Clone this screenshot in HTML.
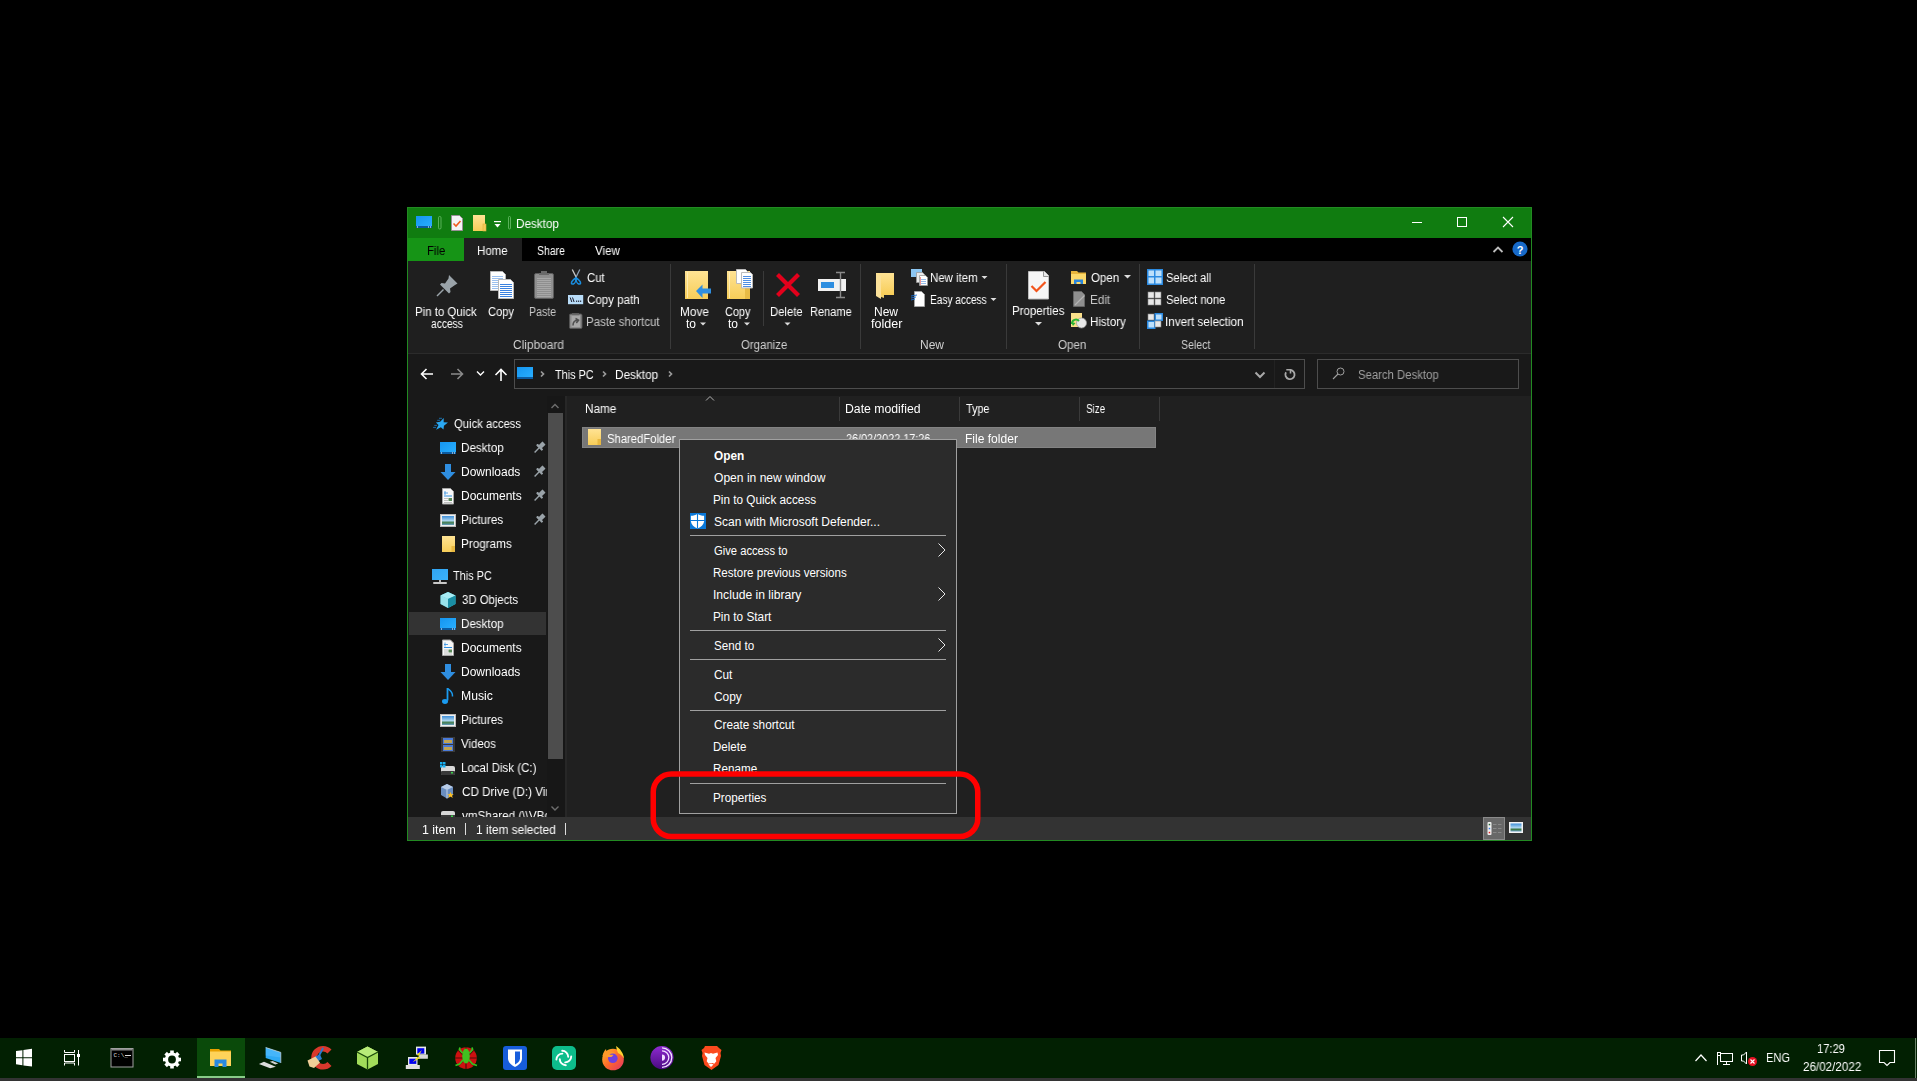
<!DOCTYPE html>
<html><head><meta charset="utf-8">
<style>
*{margin:0;padding:0;box-sizing:border-box}
html,body{width:1917px;height:1081px;background:#000;overflow:hidden;font-family:"Liberation Sans",sans-serif;font-size:12px;color:#fff}
.a{position:absolute}
.t{position:absolute;white-space:nowrap;line-height:16px;height:16px;transform-origin:0 0;will-change:transform}

svg{position:absolute;overflow:visible}
.m{will-change:auto}
</style></head><body>

<!-- window frame -->
<div class="a" style="left:407px;top:207px;width:1125px;height:634px;background:#228a22"></div>
<!-- title bar -->
<div class="a" style="left:408px;top:208px;width:1123px;height:30px;background:#107c10"></div>
<!-- tab row -->
<div class="a" style="left:408px;top:238px;width:1123px;height:23px;background:#000"></div>
<div class="a" style="left:408px;top:238px;width:56px;height:23px;background:#169416"></div>
<div class="a" style="left:464px;top:238px;width:58px;height:23px;background:#1f1f1f"></div>
<!-- ribbon body -->
<div class="a" style="left:408px;top:261px;width:1123px;height:92px;background:#1f1f1f"></div>
<div class="a" style="left:408px;top:353px;width:1123px;height:1px;background:#2b2b2b"></div>
<!-- address row -->
<div class="a" style="left:408px;top:354px;width:1123px;height:42px;background:#191919"></div>
<!-- nav pane -->
<div class="a" style="left:408px;top:396px;width:139px;height:421px;background:#191919"></div>
<div class="a" style="left:547px;top:396px;width:18px;height:421px;background:#171717"></div>
<!-- content -->
<div class="a" style="left:565px;top:396px;width:966px;height:421px;background:#202020"></div>
<div class="a" style="left:565px;top:396px;width:2px;height:421px;background:#272727"></div>
<!-- status bar -->
<div class="a" style="left:408px;top:817px;width:1123px;height:23px;background:#333333"></div>

<svg class="a" style="left:0;top:0" width="1917" height="1081" viewBox="0 0 1917 1081">
<defs>
<linearGradient id="gBlue" x1="0" y1="0" x2="1" y2="1"><stop offset="0" stop-color="#1595f0"/><stop offset="1" stop-color="#2ab0ff"/></linearGradient>
<linearGradient id="gFold" x1="0" y1="0" x2="0" y2="1"><stop offset="0" stop-color="#ffe394"/><stop offset="1" stop-color="#f7cd58"/></linearGradient>
</defs>
<!-- ===== title bar ===== -->
<rect x="416" y="216" width="16" height="12" fill="url(#gBlue)"/>
<rect x="416" y="226" width="16" height="2" fill="#0b5aa0"/>
<rect x="417" y="226.5" width="1" height="1" fill="#fff"/><rect x="428" y="226.5" width="1" height="1" fill="#fff"/><rect x="430" y="226.5" width="1" height="1" fill="#fff"/>
<rect x="438.5" y="216.5" width="2.5" height="12.5" rx="1.2" fill="none" stroke="#6cbf6c" stroke-width="0.8"/>
<path d="M451.5 215.5h8l3 3v12h-11z" fill="#f4f4f4" stroke="#9a8f98" stroke-width="1"/>
<path d="M453.5 223.5l2.5 2.5 4.5-5" fill="none" stroke="#f25a1c" stroke-width="1.6"/>
<rect x="473" y="215" width="12" height="16" fill="url(#gFold)"/>
<rect x="483" y="224" width="3" height="7" fill="#f4cc58" stroke="#e0b040" stroke-width="0.6"/>
<rect x="494" y="221" width="7" height="1.2" fill="#fff"/>
<path d="M494.5 224h6l-3 3.5z" fill="#fff"/>
<rect x="508.5" y="216.5" width="2" height="12.5" rx="1" fill="none" stroke="#6cbf6c" stroke-width="0.8"/>
<!-- window controls -->
<rect x="1412" y="222" width="10" height="1" fill="#fff"/>
<rect x="1457.5" y="217.5" width="9" height="9" fill="none" stroke="#fff" stroke-width="1"/>
<path d="M1503 217l10 10M1513 217l-10 10" stroke="#fff" stroke-width="1.1"/>
<!-- tab row right -->
<path d="M1493.5 252l4.5-4.5 4.5 4.5" fill="none" stroke="#bdbdbd" stroke-width="1.8"/>
<circle cx="1520" cy="249" r="7.6" fill="#1769c8"/>
<text x="1520" y="253.5" font-family="Liberation Sans" font-weight="bold" font-size="11" fill="#fff" text-anchor="middle">?</text>

<!-- ===== ribbon: clipboard ===== -->
<!-- pin -->
<g fill="#9aa3a9">
<path d="M449 275l8.5 8.5-2.5 1.5-5 3.5 0.5 3.5-1.5 1.5-9-9 1.5-1.5 3.5 0.5 3.5-5z"/>
<path d="M443 289l-6.5 6.5 1 1 6.5-6.5z"/>
</g>
<!-- copy -->
<path d="M490.5 271.5h12l3 3v16h-15z" fill="#fff" stroke="#b8b8b8"/>
<g stroke="#9cc0ee" stroke-width="1"><path d="M492 276.5h11M492 278.5h11M492 280.5h11M492 282.5h11M492 284.5h11M492 286.5h11M492 288.5h11"/></g>
<path d="M498.5 279.5h12l3 3v16h-15z" fill="#fff" stroke="#b8b8b8"/>
<g stroke="#3b82e0" stroke-width="1"><path d="M500 284.5h12M500 286.5h12M500 288.5h12M500 290.5h12M500 292.5h12M500 294.5h12M500 296.5h12"/></g>
<!-- paste -->
<rect x="534.5" y="273.5" width="19" height="25" rx="1.5" fill="#8f8f8f" stroke="#5c5c5c"/>
<g stroke="#a8a8a8" stroke-width="1"><path d="M537 278.5h14M537 280.5h14M537 282.5h14M537 284.5h14M537 286.5h14M537 288.5h14M537 290.5h14M537 292.5h14M537 294.5h14M537 296.5h14"/></g>
<path d="M539 275h10v-2h-2v-2h-6v2h-2z" fill="#6a6a6a"/>
<!-- scissors -->
<path d="M572.3 269.5l4.2 8.5" stroke="#c8c8c8" stroke-width="1.3"/>
<path d="M579.8 269.5l-4.2 8.5" stroke="#8ea0b4" stroke-width="1.3"/>
<path d="M576 278c-1.5 0.5-4.5 3-4.6 5 0 1 1 1.2 2 1 1.6-0.5 2.7-3.5 2.6-6z" fill="none" stroke="#1a8ee0" stroke-width="1.5"/>
<path d="M576 278c1.5 0.5 4.5 3 4.6 5 0 1-1 1.2-2 1-1.6-0.5-2.7-3.5-2.6-6z" fill="none" stroke="#1a8ee0" stroke-width="1.5"/>
<!-- copy path -->
<rect x="568" y="295" width="15.2" height="9.2" fill="#b8dcf8"/>
<path d="M570.2 297.5l1.6 4.5M572.5 297.5l1.6 4.5" stroke="#1a1a2a" stroke-width="1"/>
<rect x="576" y="300.6" width="1.2" height="1.2" fill="#1a1a2a"/><rect x="578" y="300.6" width="1.2" height="1.2" fill="#1a1a2a"/><rect x="580" y="300.6" width="1.2" height="1.2" fill="#1a1a2a"/>
<!-- paste shortcut -->
<rect x="569.5" y="314" width="12.5" height="14.5" rx="1.2" fill="#8c8c8c" stroke="#555" stroke-width="1"/>
<rect x="571.5" y="315.5" width="8.5" height="11.5" fill="#a8a8a8"/>
<rect x="572" y="313.2" width="7" height="2" fill="#666"/>
<path d="M573 325.5c0-3 1.5-5 4.5-5.2M575.5 318.5l3 1.8-2.2 2.6" fill="none" stroke="#505050" stroke-width="1.6"/>
<rect x="670" y="264" width="1" height="85" fill="#3a3a3a"/>

<!-- ===== organize ===== -->
<!-- move to -->
<rect x="685" y="271" width="23" height="28" fill="url(#gFold)"/>
<rect x="687" y="272" width="1" height="26" fill="#fff4c8" opacity="0.7"/>
<path d="M696 291l6.5-6.5v4h8.5v5h-8.5v4.5z" fill="#2f8ee0"/>
<!-- copy to -->
<rect x="727" y="271" width="23" height="28" fill="url(#gFold)"/>
<rect x="729" y="272" width="1" height="26" fill="#fff4c8" opacity="0.7"/>
<rect x="745" y="287" width="5" height="12" fill="#e8bb45"/>
<path d="M736.5 269.5h9l2 2v12h-11z" fill="#fff" stroke="#bbb"/>
<path d="M741.5 272.5h9l2 2v13.5h-11z" fill="#fff" stroke="#bbb"/>
<g stroke="#3b82e0" stroke-width="0.9"><path d="M743 276.5h8M743 278.5h8M743 280.5h8M743 282.5h8M743 284.5h8M743 286.5h8"/></g>
<rect x="763" y="271" width="1" height="55" fill="#3a3a3a"/>
<!-- delete -->
<path d="M777.5 274.5l21 21M798.5 274.5l-21 21" stroke="#e3001b" stroke-width="4.2"/>
<!-- rename -->
<rect x="818" y="279" width="28" height="12" fill="#f2f2f2"/>
<rect x="821" y="282" width="13" height="6" fill="#2e8ee0"/>
<path d="M836 272.5h9M836 297.5h9M840.5 273v24" stroke="#8a8a8a" stroke-width="1.4" fill="none"/>
<rect x="860" y="264" width="1" height="85" fill="#3a3a3a"/>

<!-- ===== new ===== -->
<path d="M876 274l8 2v22l-8-3z" fill="#f1cf6a"/>
<rect x="876" y="273" width="18" height="22" fill="url(#gFold)"/>
<path d="M876 274l5 2v23l-5-3z" fill="#fbe19a"/>
<!-- new item -->
<rect x="911" y="269" width="11" height="8" fill="#8cc6f2"/>
<path d="M916.5 272.5h6l2 2v8h-8z" fill="#e9e9e9" stroke="#999" stroke-width="0.8"/>
<path d="M919.5 275.5h6l2 2v8h-8z" fill="#fff" stroke="#999" stroke-width="0.8"/>
<g stroke="#6a9ee0" stroke-width="0.7"><path d="M921 279.5h5M921 281.5h5M921 283.5h5"/></g>
<path d="M920.5 277v8" stroke="#e05050" stroke-width="0.6"/>
<!-- easy access -->
<path d="M914.5 291.5h7l3 3v12h-10z" fill="#fff" stroke="#aaa" stroke-width="0.8"/>
<path d="M911 296l6-1M911 298l5-1M911 300l4-1" stroke="#1b6fd0" stroke-width="0.9"/>
<path d="M981.5 276h6l-3 3z" fill="#ddd"/>
<path d="M990.5 298h6l-3 3z" fill="#ddd"/>
<rect x="1006" y="264" width="1" height="85" fill="#3a3a3a"/>

<!-- ===== open ===== -->
<path d="M1028.5 271.5h16l4 4v23.5h-20z" fill="#f6f6f6" stroke="#bdbdbd"/>
<path d="M1043.5 271.5l5 5h-5z" fill="#e6e6e6"/><path d="M1043.5 271.5v5h5" fill="none" stroke="#8a8a8a" stroke-width="0.9"/>
<path d="M1031.5 286l5 5 9-9" fill="none" stroke="#f2541b" stroke-width="2.2"/>
<path d="M1035 322h7l-3.5 3.5z" fill="#ddd"/>
<!-- open small -->
<path d="M1071 271h6l1.5 1.5h7.5v11.5h-15z" fill="#e8b53c"/>
<rect x="1071" y="274" width="15" height="10" fill="#fcd96b"/>
<path d="M1074 284v-4.5h9v4.5h-2.5v-2h-4v2z" fill="#2a85dc"/>
<path d="M1124 275h7l-3.5 3.5z" fill="#ddd"/>
<!-- edit -->
<path d="M1073.5 291.5h8l3 3v12h-11z" fill="#8f8f8f" stroke="#6a6a6a" stroke-width="0.8"/>
<path d="M1075 305l9.5-9.5" stroke="#b4b4b4" stroke-width="1.2"/>
<!-- history -->
<rect x="1071" y="313" width="11" height="14" fill="#fbe08a"/>
<circle cx="1081.5" cy="323" r="5" fill="#e8e8e8" stroke="#999" stroke-width="0.7"/>
<path d="M1072 324a4 4 0 0 1 7-3" stroke="#2ab534" stroke-width="2" fill="none"/>
<path d="M1071 322l2 4 2.5-3z" fill="#2ab534"/>
<rect x="1139" y="264" width="1" height="85" fill="#3a3a3a"/>

<!-- ===== select ===== -->
<rect x="1147" y="269" width="16" height="16" fill="#2b8ae0"/>
<rect x="1148.5" y="270.5" width="5.5" height="5.5" fill="#bde0fb"/><rect x="1155.5" y="270.5" width="6" height="5.5" fill="#bde0fb"/>
<rect x="1148.5" y="277.5" width="5.5" height="6" fill="#bde0fb"/><rect x="1155.5" y="277.5" width="6" height="6" fill="#bde0fb"/>
<g fill="#e8e8e8" stroke="#888" stroke-width="0.6">
<rect x="1148" y="292" width="6" height="6"/><rect x="1155" y="292" width="6" height="6"/>
<rect x="1148" y="299" width="6" height="6"/><rect x="1155" y="299" width="6" height="6"/>
</g>
<rect x="1148" y="314" width="6" height="6" fill="#e8e8e8" stroke="#888" stroke-width="0.6"/>
<rect x="1154.5" y="313" width="8.5" height="8" fill="#2b8ae0"/><rect x="1156" y="314.5" width="5.5" height="5" fill="#bde0fb"/>
<rect x="1147" y="320.5" width="8.5" height="8.5" fill="#2b8ae0"/><rect x="1148.5" y="322" width="5.5" height="5.5" fill="#bde0fb"/>
<rect x="1155" y="321" width="6" height="6" fill="#e8e8e8" stroke="#888" stroke-width="0.6"/>
<rect x="1254" y="264" width="1" height="85" fill="#3a3a3a"/>
<path d="M700 322.5h6l-3 3z" fill="#ddd"/>
<path d="M744 322.5h6l-3 3z" fill="#ddd"/>
<path d="M784.5 322.5h6l-3 3z" fill="#ddd"/>

<!-- ===== address row ===== -->
<path d="M433 374h-11M426.5 369l-5 5 5 5" fill="none" stroke="#fff" stroke-width="1.6"/>
<path d="M451 374h11M457.5 369l5 5-5 5" fill="none" stroke="#8a8a8a" stroke-width="1.6"/>
<path d="M477 371.5l3.5 3.5 3.5-3.5" fill="none" stroke="#fff" stroke-width="1.4"/>
<path d="M501 381v-11.5M495.5 375l5.5-5.5 5.5 5.5" fill="none" stroke="#fff" stroke-width="1.6"/>
<rect x="514.5" y="359.5" width="790" height="29" fill="none" stroke="#4d4d4d"/>
<rect x="1274" y="360" width="1" height="28" fill="#222"/>
<rect x="517" y="367" width="16" height="12" fill="url(#gBlue)"/>
<rect x="517" y="377" width="16" height="2" fill="#0b5aa0"/>
<path d="M541 371.5l2.5 2.5-2.5 2.5M603 371.5l2.5 2.5-2.5 2.5M669 371.5l2.5 2.5-2.5 2.5" fill="none" stroke="#9a9a9a" stroke-width="1.7"/>
<path d="M1255.5 372.5l4.5 4.5 4.5-4.5" fill="none" stroke="#a8a8a8" stroke-width="2"/>
<path d="M1290 370a4.6 4.6 0 1 1-4 2.3" fill="none" stroke="#a8a8a8" stroke-width="1.8"/>
<path d="M1286.3 369.8h4.2v3.8" fill="none" stroke="#a8a8a8" stroke-width="1.6"/>
<rect x="1317.5" y="359.5" width="201" height="29" fill="none" stroke="#4d4d4d"/>
<circle cx="1340.5" cy="371.5" r="3.5" fill="none" stroke="#a0a0a0" stroke-width="1"/>
<path d="M1338 374l-5 5" stroke="#a0a0a0" stroke-width="1.1"/>
</svg>

<svg class="a" style="left:0;top:0" width="1917" height="1081" viewBox="0 0 1917 1081">
<defs>
<linearGradient id="gBlue2" x1="0" y1="0" x2="1" y2="1"><stop offset="0" stop-color="#1595f0"/><stop offset="1" stop-color="#2ab0ff"/></linearGradient>
<linearGradient id="gFold2" x1="0" y1="0" x2="0" y2="1"><stop offset="0" stop-color="#ffe394"/><stop offset="1" stop-color="#f7cd58"/></linearGradient>
<linearGradient id="gPic" x1="0" y1="0" x2="0" y2="1"><stop offset="0" stop-color="#3f8fd8"/><stop offset="0.5" stop-color="#a9d3ee"/><stop offset="0.75" stop-color="#3f7a4a"/><stop offset="1" stop-color="#6aa0c8"/></linearGradient>
</defs>
<!-- selected nav row -->
<rect x="409" y="612" width="137" height="23" fill="#333"/>
<!-- nav scrollbar -->
<rect x="548" y="413" width="15" height="346" fill="#4d4d4d"/>
<path d="M551.5 408l3.5-3.5 3.5 3.5" fill="none" stroke="#6e6e6e" stroke-width="1.4"/>
<path d="M551.5 806.5l3.5 3.5 3.5-3.5" fill="none" stroke="#6e6e6e" stroke-width="1.4"/>
<!-- quick access star -->
<path d="M443.70 417.90 L443.68 422.30 L448.00 422.50 L443.93 425.64 L443.50 429.50 L440.85 427.30 L436.10 429.70 L438.52 425.12 L435.90 422.60 L440.17 421.87z" fill="#2aa8f2"/>
<path d="M439 418.3h3M437.2 420.3h2.8M434.3 425.4h2.7M433.1 427.4h2.9" stroke="#1a7ec8" stroke-width="1" opacity="0.8"/>
<!-- desktop icons -->
<g><rect x="440" y="442" width="16" height="12" fill="url(#gBlue2)"/><rect x="440" y="452" width="16" height="2" fill="#0b5aa0"/><rect x="441" y="452.5" width="1" height="1" fill="#fff"/><rect x="452" y="452.5" width="1" height="1" fill="#fff"/><rect x="454" y="452.5" width="1" height="1" fill="#fff"/></g>
<g transform="translate(0 176)"><g><rect x="440" y="442" width="16" height="12" fill="url(#gBlue2)"/><rect x="440" y="452" width="16" height="2" fill="#0b5aa0"/><rect x="441" y="452.5" width="1" height="1" fill="#fff"/><rect x="452" y="452.5" width="1" height="1" fill="#fff"/><rect x="454" y="452.5" width="1" height="1" fill="#fff"/></g></g>
<!-- downloads -->
<g><path d="M445 464h6v8h4.5l-7.5 8-7.5-8h4.5z" fill="#2f8ee0"/></g>
<g transform="translate(0 200)"><g><path d="M445 464h6v8h4.5l-7.5 8-7.5-8h4.5z" fill="#2f8ee0"/></g></g>
<!-- documents -->
<g><path d="M442.5 488.5h8l3 3v12.5h-11z" fill="#f8f8f8" stroke="#a6a6a6"/>
<path d="M444 493h4M445 491v4" stroke="#2f8ee0" stroke-width="0.8"/><path d="M444 496h8" stroke="#2f8ee0" stroke-width="1"/>
<path d="M444 498.5h4M444 500.5h4M444 502.5h8" stroke="#9a9a9a" stroke-width="0.6"/><rect x="448.5" y="498" width="3.5" height="3" fill="#5a8a5a"/></g>
<g transform="translate(0 151.5)"><g><path d="M442.5 488.5h8l3 3v12.5h-11z" fill="#f8f8f8" stroke="#a6a6a6"/>
<path d="M444 493h4M445 491v4" stroke="#2f8ee0" stroke-width="0.8"/><path d="M444 496h8" stroke="#2f8ee0" stroke-width="1"/>
<path d="M444 498.5h4M444 500.5h4M444 502.5h8" stroke="#9a9a9a" stroke-width="0.6"/><rect x="448.5" y="498" width="3.5" height="3" fill="#5a8a5a"/></g></g>
<!-- pictures -->
<g><rect x="440.5" y="514.5" width="15" height="12" fill="#f0f0f0" stroke="#bbb"/><rect x="442" y="516" width="12" height="9" fill="url(#gPic)"/></g>
<g transform="translate(0 200)"><g><rect x="440.5" y="514.5" width="15" height="12" fill="#f0f0f0" stroke="#bbb"/><rect x="442" y="516" width="12" height="9" fill="url(#gPic)"/></g></g>
<!-- programs folder -->
<rect x="442" y="536" width="13" height="16" fill="url(#gFold2)"/>
<rect x="451.5" y="546" width="3.5" height="6" fill="#e8b840"/>
<!-- pins -->
<g fill="#9aa3a9" transform="translate(539.2 447.8) rotate(45)"><rect x="-2.2" y="-6.8" width="4.4" height="5.5" rx="0.5"/><rect x="-4" y="-1.8" width="8" height="2.2" rx="0.6"/><rect x="-0.7" y="0" width="1.4" height="6.5"/></g>
<g transform="translate(0 24)"><g fill="#9aa3a9" transform="translate(539.2 447.8) rotate(45)"><rect x="-2.2" y="-6.8" width="4.4" height="5.5" rx="0.5"/><rect x="-4" y="-1.8" width="8" height="2.2" rx="0.6"/><rect x="-0.7" y="0" width="1.4" height="6.5"/></g></g><g transform="translate(0 48)"><g fill="#9aa3a9" transform="translate(539.2 447.8) rotate(45)"><rect x="-2.2" y="-6.8" width="4.4" height="5.5" rx="0.5"/><rect x="-4" y="-1.8" width="8" height="2.2" rx="0.6"/><rect x="-0.7" y="0" width="1.4" height="6.5"/></g></g><g transform="translate(0 72)"><g fill="#9aa3a9" transform="translate(539.2 447.8) rotate(45)"><rect x="-2.2" y="-6.8" width="4.4" height="5.5" rx="0.5"/><rect x="-4" y="-1.8" width="8" height="2.2" rx="0.6"/><rect x="-0.7" y="0" width="1.4" height="6.5"/></g></g>
<!-- this PC -->
<rect x="432" y="569" width="16" height="11" fill="#4cb4f5"/>
<path d="M432 569h16v11h-16z" fill="url(#gBlue2)" opacity="0.5"/>
<rect x="439" y="580" width="2" height="2" fill="#b8b8b8"/>
<rect x="433" y="582" width="14" height="2" rx="1" fill="#c8c8c8"/>
<!-- 3d objects -->
<path d="M448 592l7.5 3.5v8.5l-7.5 4-7.5-4v-8.5z" fill="#3cc6d8"/>
<path d="M440.5 595.5l7.5 3.5 7.5-3.5-7.5-3.5z" fill="#a8ecf4"/>
<path d="M448 599v9l7.5-4v-8.5z" fill="#1a8ea4"/>
<path d="M440.5 595.5l7.5 3.5v9l-7.5-4z" fill="#d6f6fa" opacity="0.6"/>
<!-- music -->
<path d="M447.5 688v12.5" stroke="#1a9bf0" stroke-width="1.8"/>
<ellipse cx="445" cy="701.5" rx="3" ry="2.4" fill="#1a9bf0"/>
<path d="M447.5 688.5c2 1.5 5.5 3 5 8" stroke="#1a9bf0" stroke-width="1.5" fill="none"/>
<!-- videos -->
<rect x="441" y="737" width="14" height="15" fill="#3a3a3a"/>
<rect x="443" y="738" width="10" height="6" fill="#4a7ad8"/><rect x="443" y="745" width="10" height="6" fill="#4a7ad8"/>
<rect x="444" y="740" width="8" height="3" fill="#e0b030" opacity="0.8"/><rect x="444" y="747" width="8" height="3" fill="#e0b030" opacity="0.8"/>
<!-- local disk -->
<rect x="441" y="766" width="14" height="9" rx="2" fill="#d8d8d8"/>
<rect x="441" y="771" width="14" height="4" rx="1" fill="#3a3a3a"/>
<rect x="451" y="772" width="2" height="1.5" fill="#3ad04a"/>
<rect x="440" y="762" width="2.5" height="2.5" fill="#1ab0f0"/><rect x="443" y="762" width="2.5" height="2.5" fill="#1ab0f0"/><rect x="440" y="765" width="2.5" height="2.5" fill="#1ab0f0"/><rect x="443" y="765" width="2.5" height="2.5" fill="#1ab0f0"/>
<!-- CD virtualbox -->
<path d="M447 784l6 3v8l-6 3.5-6-3.5v-8z" fill="#6a8ec0"/>
<path d="M441 787l6 3 6-3-6-3z" fill="#b8cce8"/>
<path d="M447 790v8.5" stroke="#dde6f2" stroke-width="0.8"/>
<path d="M450.5 792l1 2.2h2.3l-1.8 1.4 0.7 2.3-2.2-1.4-2.2 1.4 0.7-2.3-1.8-1.4h2.3z" fill="#ffc020"/>
<!-- vmShared -->
<path d="M441 817v-4a2 2 0 0 1 2-2h10a2 2 0 0 1 2 2v4z" fill="#d8d8d8"/>
<rect x="441" y="815" width="14" height="2" fill="#3a3a3a"/>
<rect x="451" y="815.5" width="2" height="1.5" fill="#3ad04a"/>

<!-- ===== content ===== -->
<path d="M706 400.5l4-4 4 4" fill="none" stroke="#b0b0b0" stroke-width="1"/>
<rect x="839" y="397" width="1" height="24" fill="#3a3a3a"/>
<rect x="959" y="397" width="1" height="24" fill="#3a3a3a"/>
<rect x="1079" y="397" width="1" height="24" fill="#3a3a3a"/>
<rect x="1159" y="397" width="1" height="24" fill="#3a3a3a"/>
<rect x="582.5" y="427.5" width="573" height="20" fill="#777" stroke="#838383"/>
<rect x="588" y="429" width="13" height="16" fill="url(#gFold2)"/>
<rect x="597.5" y="439" width="3.5" height="6" fill="#e8b840"/>

<!-- ===== status bar ===== -->
<rect x="465" y="823" width="1" height="12" fill="#ddd"/>
<rect x="565" y="823" width="1" height="12" fill="#ddd"/>
<rect x="1483.5" y="817.5" width="21" height="22" fill="#686868" stroke="#8a8a8a"/>
<rect x="1487.5" y="822" width="4" height="13" rx="1" fill="#f0f0f0"/>
<rect x="1488.7" y="823.8" width="1.5" height="1.5" fill="#2a6a3a"/><rect x="1488.7" y="827.8" width="1.5" height="1.5" fill="#3a7ae0"/><rect x="1488.7" y="831.8" width="1.5" height="1.5" fill="#e02020"/>
<path d="M1493 824.5h3.5M1498 824.5h3.5M1493 828.5h3.5M1498 828.5h3.5M1493 832.5h3.5M1498 832.5h3.5" stroke="#909090" stroke-width="0.8"/>
<rect x="1509" y="822" width="14" height="11" fill="#f4f4f4"/>
<rect x="1510.5" y="823.5" width="11" height="8" fill="url(#gPic)"/>
</svg>

<div class="t" style="left:516.22px;top:216px;color:#fff;transform:scaleX(0.9767)">Desktop</div>
<div class="t" style="left:426.56px;top:243px;color:#000;transform:scaleX(0.9444)">File</div>
<div class="t" style="left:477.04px;top:243px;color:#fff;transform:scaleX(0.9581)">Home</div>
<div class="t" style="left:537.00px;top:243px;color:#fff;transform:scaleX(0.8750)">Share</div>
<div class="t" style="left:594.80px;top:243px;color:#fff;transform:scaleX(0.9615)">View</div>
<div class="t" style="left:415.05px;top:304px;color:#fff;transform:scaleX(0.9531)">Pin to Quick</div>
<div class="t" style="left:431.00px;top:316px;color:#fff;transform:scaleX(0.8541)">access</div>
<div class="t" style="left:488.00px;top:304px;color:#fff;transform:scaleX(0.9286)">Copy</div>
<div class="t" style="left:529.12px;top:304px;color:#c8c8c8;transform:scaleX(0.8833)">Paste</div>
<div class="t" style="left:587.00px;top:270px;color:#fff;transform:scaleX(0.9474)">Cut</div>
<div class="t" style="left:587.00px;top:292px;color:#fff;transform:scaleX(0.9630)">Copy path</div>
<div class="t" style="left:586.04px;top:314px;color:#c8c8c8;transform:scaleX(0.9605)">Paste shortcut</div>
<div class="t" style="left:513.00px;top:337px;color:#cfcfcf;transform:scaleX(0.9902)">Clipboard</div>
<div class="t" style="left:680.02px;top:304px;color:#fff;transform:scaleX(0.9821)">Move</div>
<div class="t" style="left:686.00px;top:316px;color:#fff;transform:scaleX(1.0000)">to</div>
<div class="t" style="left:724.60px;top:304px;color:#fff;transform:scaleX(0.9071)">Copy</div>
<div class="t" style="left:728.00px;top:316px;color:#fff;transform:scaleX(1.0000)">to</div>
<div class="t" style="left:770.06px;top:304px;color:#fff;transform:scaleX(0.9412)">Delete</div>
<div class="t" style="left:810.08px;top:304px;color:#fff;transform:scaleX(0.9182)">Rename</div>
<div class="t" style="left:741.00px;top:337px;color:#cfcfcf;transform:scaleX(0.9510)">Organize</div>
<div class="t" style="left:874.00px;top:304px;color:#fff;transform:scaleX(1.0000)">New</div>
<div class="t" style="left:870.60px;top:316px;color:#fff;transform:scaleX(1.0467)">folder</div>
<div class="t" style="left:929.55px;top:270px;color:#fff;transform:scaleX(0.9531)">New item</div>
<div class="t" style="left:929.66px;top:292px;color:#fff;transform:scaleX(0.8424)">Easy access</div>
<div class="t" style="left:920.00px;top:337px;color:#cfcfcf;transform:scaleX(1.0000)">New</div>
<div class="t" style="left:1012.04px;top:303px;color:#fff;transform:scaleX(0.9574)">Properties</div>
<div class="t" style="left:1090.60px;top:270px;color:#fff;transform:scaleX(0.9586)">Open</div>
<div class="t" style="left:1089.62px;top:292px;color:#c8c8c8;transform:scaleX(0.9750)">Edit</div>
<div class="t" style="left:1089.64px;top:314px;color:#fff;transform:scaleX(0.9595)">History</div>
<div class="t" style="left:1057.60px;top:337px;color:#cfcfcf;transform:scaleX(0.9655)">Open</div>
<div class="t" style="left:1166.00px;top:270px;color:#fff;transform:scaleX(0.9271)">Select all</div>
<div class="t" style="left:1166.00px;top:292px;color:#fff;transform:scaleX(0.9365)">Select none</div>
<div class="t" style="left:1165.03px;top:314px;color:#fff;transform:scaleX(0.9747)">Invert selection</div>
<div class="t" style="left:1181.00px;top:337px;color:#cfcfcf;transform:scaleX(0.8824)">Select</div>
<div class="t" style="left:554.50px;top:367px;color:#fff;transform:scaleX(0.9048)">This PC</div>
<div class="t" style="left:615.32px;top:367px;color:#fff;transform:scaleX(0.9814)">Desktop</div>
<div class="t" style="left:1358.20px;top:367px;color:#a0a0a0;transform:scaleX(0.9447)">Search Desktop</div>
<div class="t" style="left:584.92px;top:401px;color:#fff;transform:scaleX(0.9806)">Name</div>
<div class="t" style="left:844.98px;top:401px;color:#fff;transform:scaleX(1.0205)">Date modified</div>
<div class="t" style="left:966.00px;top:401px;color:#fff;transform:scaleX(0.9000)">Type</div>
<div class="t" style="left:1086.40px;top:401px;color:#fff;transform:scaleX(0.8174)">Size</div>
<div class="t" style="left:606.70px;top:431px;color:#fff;transform:scaleX(0.9384)">SharedFolder</div>
<div class="t" style="left:846.00px;top:431px;color:#fff;transform:scaleX(0.9032)">26/02/2022 17:26</div>
<div class="t" style="left:965.00px;top:431px;color:#fff;transform:scaleX(1.0038)">File folder</div>
<div class="t" style="left:421.66px;top:822px;color:#fff;transform:scaleX(1.0355)">1 item</div>
<div class="t" style="left:475.81px;top:822px;color:#fff;transform:scaleX(0.9899)">1 item selected</div>
<div class="a" style="left:408px;top:396px;width:139px;height:421px;overflow:hidden">
<div class="t" style="left:45.70px;top:20px;color:#fff;transform:scaleX(0.9394)">Quick access</div>
<div class="t" style="left:52.53px;top:44px;color:#fff;transform:scaleX(0.9721)">Desktop</div>
<div class="t" style="left:52.50px;top:68px;color:#fff;transform:scaleX(1.0000)">Downloads</div>
<div class="t" style="left:52.50px;top:92px;color:#fff;transform:scaleX(1.0000)">Documents</div>
<div class="t" style="left:52.53px;top:116px;color:#fff;transform:scaleX(0.9738)">Pictures</div>
<div class="t" style="left:52.52px;top:140px;color:#fff;transform:scaleX(0.9765)">Programs</div>
<div class="t" style="left:45.20px;top:172px;color:#fff;transform:scaleX(0.9095)">This PC</div>
<div class="t" style="left:53.70px;top:196px;color:#fff;transform:scaleX(0.9458)">3D Objects</div>
<div class="t" style="left:52.73px;top:220px;color:#fff;transform:scaleX(0.9674)">Desktop</div>
<div class="t" style="left:52.70px;top:244px;color:#fff;transform:scaleX(0.9983)">Documents</div>
<div class="t" style="left:52.70px;top:268px;color:#fff;transform:scaleX(1.0000)">Downloads</div>
<div class="t" style="left:52.68px;top:292px;color:#fff;transform:scaleX(1.0167)">Music</div>
<div class="t" style="left:52.73px;top:316px;color:#fff;transform:scaleX(0.9690)">Pictures</div>
<div class="t" style="left:53.10px;top:340px;color:#fff;transform:scaleX(0.9556)">Videos</div>
<div class="t" style="left:52.74px;top:364px;color:#fff;transform:scaleX(0.9584)">Local Disk (C:)</div>
<div class="t" style="left:53.70px;top:388px;color:#fff;transform:scaleX(0.9722)">CD Drive (D:) VirtualBox Guest Additions</div>
<div class="t" style="left:53.70px;top:412px;color:#fff;transform:scaleX(0.9722)">vmShared (\\VBoxSvr) (E:)</div>
</div>
<!-- context menu -->
<div class="a" style="left:679px;top:439px;width:278px;height:375px;background:#2b2b2b;border:1px solid #a0a0a0"></div>
<svg class="a" style="left:0;top:0" width="1917" height="1081" viewBox="0 0 1917 1081">
<rect x="690" y="513" width="16" height="16" fill="#0a78d8"/>
<path d="M697.5 513.8c2 1.4 4 2 6.6 2v5.7c-0.5 3.3-3 5.4-6.6 7-3.6-1.6-6.1-3.7-6.6-7v-5.7c2.6 0 4.6-0.6 6.6-2z" fill="#fff"/>
<path d="M697.5 513.5v15M690 520.5h15" stroke="#0a78d8" stroke-width="1.1"/>
<g fill="#a0a0a0"><rect x="690" y="535" width="256" height="1"/><rect x="690" y="630" width="256" height="1"/><rect x="690" y="659" width="256" height="1"/><rect x="690" y="710" width="256" height="1"/><rect x="690" y="783" width="256" height="1"/></g>
<g fill="none" stroke="#e8e8e8" stroke-width="1"><path d="M938.5 543.5l6.5 6.5-6.5 6.5M938.5 587.5l6.5 6.5-6.5 6.5M938.5 638.5l6.5 6.5-6.5 6.5"/></g>
</svg>
<div class="t m" style="left:714.30px;top:448px;color:#fff;transform:scaleX(0.9867);font-weight:bold">Open</div>
<div class="t m" style="left:714.30px;top:470px;color:#fff;transform:scaleX(1.0063)">Open in new window</div>
<div class="t m" style="left:713.32px;top:492px;color:#fff;transform:scaleX(0.9788)">Pin to Quick access</div>
<div class="t m" style="left:714.30px;top:514px;color:#fff;transform:scaleX(0.9994)">Scan with Microsoft Defender...</div>
<div class="t m" style="left:714.00px;top:543px;color:#fff;transform:scaleX(0.9342)">Give access to</div>
<div class="t m" style="left:713.04px;top:565px;color:#fff;transform:scaleX(0.9638)">Restore previous versions</div>
<div class="t m" style="left:712.99px;top:587px;color:#fff;transform:scaleX(1.0115)">Include in library</div>
<div class="t m" style="left:713.02px;top:609px;color:#fff;transform:scaleX(0.9831)">Pin to Start</div>
<div class="t m" style="left:714.00px;top:638px;color:#fff;transform:scaleX(0.9707)">Send to</div>
<div class="t m" style="left:714.20px;top:667px;color:#fff;transform:scaleX(0.9842)">Cut</div>
<div class="t m" style="left:714.20px;top:689px;color:#fff;transform:scaleX(0.9929)">Copy</div>
<div class="t m" style="left:714.20px;top:717px;color:#fff;transform:scaleX(0.9829)">Create shortcut</div>
<div class="t m" style="left:713.24px;top:739px;color:#fff;transform:scaleX(0.9618)">Delete</div>
<div class="t m" style="left:713.23px;top:761px;color:#fff;transform:scaleX(0.9727)">Rename</div>
<div class="t m" style="left:713.22px;top:790px;color:#fff;transform:scaleX(0.9759)">Properties</div>

<!-- red highlight -->
<svg class="a" style="left:0;top:0" width="1917" height="1081" viewBox="0 0 1917 1081">
<rect x="653.25" y="774" width="324.5" height="62.5" rx="18" ry="18" fill="none" stroke="#ff0000" stroke-width="5.5"/>
</svg>
<!-- taskbar -->
<div class="a" style="left:0;top:1038px;width:1917px;height:40px;background:#022002"></div>
<div class="a" style="left:0;top:1078px;width:1917px;height:3px;background:#333"></div>
<div class="a" style="left:197px;top:1038px;width:48px;height:40px;background:#0a4a0a"></div>
<div class="a" style="left:197px;top:1076px;width:48px;height:2px;background:#88cc88"></div>
<div class="a" style="left:1915px;top:1038px;width:1px;height:40px;background:#6a826a"></div>
<svg class="a" style="left:0;top:0" width="1917" height="1081" viewBox="0 0 1917 1081">
<defs>
<linearGradient id="gFx" x1="0" y1="0" x2="1" y2="1"><stop offset="0" stop-color="#ffbd2e"/><stop offset="0.5" stop-color="#ff6a2a"/><stop offset="1" stop-color="#e0306a"/></linearGradient>
<linearGradient id="gTor" x1="0" y1="0" x2="0" y2="1"><stop offset="0" stop-color="#8e2bd0"/><stop offset="1" stop-color="#4a0a80"/></linearGradient>
</defs>
<!-- windows logo -->
<path d="M16 1051.1l6.4-0.9v7h-6.4zM23.4 1050l8.6-1.2v8.4h-8.6zM16 1058.2h6.4v7l-6.4-0.9zM23.4 1058.2h8.6v8.4l-8.6-1.2z" fill="#fff"/>
<!-- task view -->
<g fill="none" stroke="#fff" stroke-width="1"><path d="M64.5 1050v2.5h10v-2.5M64.5 1065.5v-2.5h10v2.5"/><rect x="64.5" y="1054.5" width="10" height="7"/><path d="M78.5 1050v15.5"/></g>
<rect x="77" y="1054" width="3" height="3" fill="#fff"/>
<!-- cmd -->
<rect x="111" y="1048.5" width="22" height="18.5" fill="#000" stroke="#a0a0a0" stroke-width="1"/>
<rect x="111.5" y="1049" width="21" height="1.5" fill="#8a8a8a"/>
<text x="113.5" y="1056.5" font-family="Liberation Mono" font-size="6" fill="#ddd">C:\_</text>
<rect x="125" y="1055" width="6" height="1" fill="#ddd"/>
<!-- gear -->
<g transform="translate(172 1059.5)"><circle r="5.5" fill="none" stroke="#fff" stroke-width="3.2"/>
<g fill="#fff"><rect x="-1.8" y="-9" width="3.6" height="4"/><rect x="-1.8" y="5" width="3.6" height="4"/><rect x="-9" y="-1.8" width="4" height="3.6"/><rect x="5" y="-1.8" width="4" height="3.6"/>
<g transform="rotate(45)"><rect x="-1.8" y="-9" width="3.6" height="4"/><rect x="-1.8" y="5" width="3.6" height="4"/><rect x="-9" y="-1.8" width="4" height="3.6"/><rect x="5" y="-1.8" width="4" height="3.6"/></g></g></g>
<!-- explorer -->
<path d="M210 1049h9l1.5 1.5h10.5v15.5h-21z" fill="#e8a000"/>
<rect x="210" y="1051.5" width="21" height="14.5" fill="#ffd35a"/>
<path d="M214.5 1067v-7.5h12v7.5h-4v-3.5h-4v3.5z" fill="#2b8ae0"/>
<!-- computer -->
<path d="M265.7 1047.5l15.1 4.9v10.6l-15.1-5z" fill="#2eaaf5"/>
<path d="M265.7 1047.5l15.1 4.9v5l-15.1-2z" fill="#5cc0ff" opacity="0.5"/>
<path d="M265.7 1047.5l15.1 4.9" stroke="#c8d8e0" stroke-width="0.8"/>
<path d="M280.8 1052.4v10.6" stroke="#c0c8d0" stroke-width="0.8"/>
<path d="M258.9 1063.9l5.1-2.1 11.8 5-5.6 1.4z" fill="#dcdcdc"/>
<path d="M269.7 1061.8l3-0.8 5.5 2.5-3 1z" fill="#d0d0d0"/>
<!-- ccleaner -->
<path d="M329.5 1051.5a9 9 0 1 0 0 12.5" fill="none" stroke="#d8382c" stroke-width="5.6"/>
<path d="M322.8 1048.5l-4.5 8.5" stroke="#2a7ad0" stroke-width="1.8" stroke-linecap="round"/>
<path d="M315 1056.5l5-2 2 4.5-4.5 2.5z" fill="#2a7ad0"/>
<path d="M307.5 1060.5l8-4 4.5 6-6 5.5-4.5-1.5z" fill="#f0cf98"/>
<!-- green cube -->
<path d="M367.5 1046.5l10.5 5.5v12l-10.5 5.5-10.5-5.5v-12z" fill="#a2dc5a"/>
<path d="M357 1052l10.5 5.5 10.5-5.5-10.5-5.5z" fill="#b8ec78"/>
<path d="M357 1052l10.5 5.5 10.5-5.5M367.5 1057.5v12" stroke="#1a4a0a" stroke-width="1.3" fill="none"/>
<!-- putty -->
<rect x="416" y="1046.6" width="10" height="8" fill="#e8e8e8"/><rect x="417.3" y="1048.2" width="7" height="5.4" fill="#0000f0"/>
<path d="M419.4 1054.5h8.5v4.3h-10z" fill="#d8d8d8"/>
<rect x="408" y="1057" width="9.5" height="8" fill="#e8e8e8"/><rect x="409.3" y="1058.7" width="7" height="5.2" fill="#0000f0"/>
<rect x="405.8" y="1065" width="14" height="4" fill="#e0e0e0"/>
<path d="M422 1050l-5.5 5 2.5 0.8-6.5 6.5 8-4.5-2.3-1z" fill="#f0e020"/>
<!-- frog -->
<circle cx="466" cy="1058" r="10.8" fill="#cc1010"/>
<path d="M466 1047.2v21.6M455.2 1058h21.6M458.4 1050.4l15.2 15.2M473.6 1050.4l-15.2 15.2" stroke="#200808" stroke-width="1.2" opacity="0.7"/>
<ellipse cx="466" cy="1056" rx="3.8" ry="7.5" fill="#40c020"/>
<path d="M462.5 1053l-3-3.5 0.5-2M469.5 1053l3-3.5-0.5-2M463 1060l-3.5 4-4 1.5M469 1060l3.5 4 4.5 1.5" stroke="#38c020" stroke-width="1.8" fill="none"/>
<!-- bitwarden -->
<rect x="503" y="1046" width="24" height="24" rx="3" fill="#175ddc"/>
<path d="M508 1049.5h14v9c0 4-3.5 6.5-7 8.5-3.5-2-7-4.5-7-8.5z" fill="#fff"/>
<path d="M515 1051.5h5v7c0 2.6-2.3 4.5-5 6z" fill="#175ddc"/>
<!-- element -->
<rect x="552" y="1046" width="24" height="24" rx="5" fill="#0dbd8b"/>
<g fill="none" stroke="#fff" stroke-width="1.9" stroke-linecap="round"><path d="M562.2 1050.8A6 6 0 0 1 568.2 1056.8"/><path d="M571.2 1056.4A6 6 0 0 1 565.2 1062.4"/><path d="M565.8 1065.2A6 6 0 0 1 559.8 1059.2"/><path d="M556.4 1059.6A6 6 0 0 1 562.4 1053.6"/></g>
<!-- firefox -->
<circle cx="613" cy="1059.5" r="10.8" fill="url(#gFx)"/>
<path d="M602.5 1056c0.5-3 2-5.5 3.5-7l0.5 3c1-1 2-1.5 3-1.8l-1 2.5c2-1 5-1 7 0.5l-3 1.5c-2 0-4 0.5-6 2z" fill="#ff9a2a"/>
<path d="M616 1046c4 2.5 7.5 7 8 12.5-1.5-2.5-3.5-4.5-6-5.5l-1-2.5z" fill="#ffd030"/>
<circle cx="612.8" cy="1058.3" r="4.8" fill="#7040e0"/>
<path d="M606 1056c2-1 5-1.5 7.5-1l-2 2c-2 0-4 0.2-5.5-1z" fill="#ffa030"/>
<!-- tor -->
<circle cx="662" cy="1057.6" r="11.6" fill="url(#gTor)"/>
<g fill="none" stroke="#f0e0ff" stroke-width="1.3"><path d="M662 1047.8a9.8 9.8 0 0 1 0 19.6"/><path d="M662 1050.8a6.8 6.8 0 0 1 0 13.6"/></g>
<path d="M662 1054.5a3.1 3.1 0 0 1 0 6.2z" fill="#f0e0ff"/>
<!-- brave -->
<path d="M705 1046h12l2 2 2.5 2-1 3 0.5 3-2.5 9-7 5-7-5-2.5-9 0.5-3-1-3 2.5-2z" fill="#fb4a1e"/>
<path d="M704.5 1052.5l4.5 1.2 2-0.7 2 0.7 4.5-1.2 0.5 2.5-2.5 3 0.8 3.2-2 2.5-1.8-0.8h-2l-1.8 0.8-2-2.5 0.8-3.2-2.5-3z" fill="#fff"/>
<path d="M708.5 1064.5l2.5-1 2.5 1-2.5 2.5z" fill="#fff"/>
<!-- tray -->
<path d="M1695.5 1061l5.5-6 5.5 6" fill="none" stroke="#fff" stroke-width="1.2"/>
<g fill="none" stroke="#fff" stroke-width="1"><rect x="1720.5" y="1053.5" width="12" height="8"/><path d="M1726.5 1061.5v3M1723 1064.5h7M1717.5 1053v12"/><rect x="1717.5" y="1052.5" width="3" height="3"/></g>
<path d="M1741.5 1055h2l3-3v12l-3-3h-2z" fill="none" stroke="#fff" stroke-width="1"/>
<circle cx="1752.5" cy="1061.5" r="4.5" fill="#e81123"/>
<path d="M1750.5 1059.5l4 4M1754.5 1059.5l-4 4" stroke="#fff" stroke-width="1.1"/>
<path d="M1884 1062.5h-4.5v-12h15v12h-4.5l-3 3-3-3" fill="none" stroke="#fff" stroke-width="1.1"/>
</svg>
<div class="t" style="left:1766.08px;top:1050px;color:#fff;transform:scaleX(0.9200)">ENG</div>
<div class="t" style="left:1817.07px;top:1041px;color:#fff;transform:scaleX(0.9310)">17:29</div>
<div class="t" style="left:1802.80px;top:1059px;color:#fff;transform:scaleX(0.9700)">26/02/2022</div>
</body></html>
